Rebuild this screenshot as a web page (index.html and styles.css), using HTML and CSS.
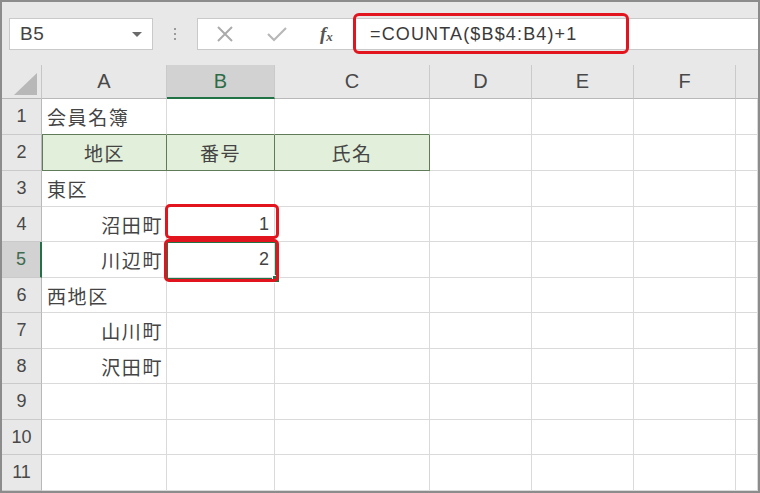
FILE: index.html
```html
<!DOCTYPE html>
<html lang="ja">
<head>
<meta charset="utf-8">
<link rel="stylesheet" href="styles.css">
</head>
<body>
<div class="frame">
  <div class="toolbar">
    <div class="namebox">
      <span class="name">B5</span>
      <span class="caret"></span>
    </div>
    <div class="grip"><span></span><span></span><span></span></div>
    <div class="fbar">
      <div class="fbtns">
        <svg class="ico" width="18" height="16" viewBox="0 0 18 16"><path d="M2 1 L16 15 M16 1 L2 15" stroke="#ababab" stroke-width="2" fill="none"/></svg>
        <svg class="ico" width="22" height="16" viewBox="0 0 22 16"><path d="M2 8 L8 14 L20 2" stroke="#b8b8b8" stroke-width="2.2" fill="none"/></svg>
        <span class="fx">f<sub>x</sub></span>
      </div>
      <div class="formula">=COUNTA($B$4:B4)+1</div>
    </div>
    <div class="redbox formula-mark"></div>
  </div>
  <div class="sheet">
    <div class="corner"><span class="tri"></span></div>
    <div class="ch">A</div><div class="ch sel">B</div><div class="ch">C</div><div class="ch">D</div><div class="ch">E</div><div class="ch">F</div><div class="ch last"></div>

    <div class="rh">1</div><div class="c l hb">会員名簿</div><div class="c hb"></div><div class="c hb"></div><div class="c"></div><div class="c"></div><div class="c"></div><div class="c"></div>
    <div class="rh">2</div><div class="c ctr hd first">地区</div><div class="c ctr hd">番号</div><div class="c ctr hd">氏名</div><div class="c"></div><div class="c"></div><div class="c"></div><div class="c"></div>
    <div class="rh">3</div><div class="c l">東区</div><div class="c"></div><div class="c"></div><div class="c"></div><div class="c"></div><div class="c"></div><div class="c"></div>
    <div class="rh">4</div><div class="c r">沼田町</div><div class="c r num">1</div><div class="c"></div><div class="c"></div><div class="c"></div><div class="c"></div><div class="c"></div>
    <div class="rh sel">5</div><div class="c r">川辺町</div><div class="c r num">2</div><div class="c"></div><div class="c"></div><div class="c"></div><div class="c"></div><div class="c"></div>
    <div class="rh">6</div><div class="c l">西地区</div><div class="c"></div><div class="c"></div><div class="c"></div><div class="c"></div><div class="c"></div><div class="c"></div>
    <div class="rh">7</div><div class="c r">山川町</div><div class="c"></div><div class="c"></div><div class="c"></div><div class="c"></div><div class="c"></div><div class="c"></div>
    <div class="rh">8</div><div class="c r">沢田町</div><div class="c"></div><div class="c"></div><div class="c"></div><div class="c"></div><div class="c"></div><div class="c"></div>
    <div class="rh">9</div><div class="c"></div><div class="c"></div><div class="c"></div><div class="c"></div><div class="c"></div><div class="c"></div><div class="c"></div>
    <div class="rh">10</div><div class="c"></div><div class="c"></div><div class="c"></div><div class="c"></div><div class="c"></div><div class="c"></div><div class="c"></div>
    <div class="rh">11</div><div class="c"></div><div class="c"></div><div class="c"></div><div class="c"></div><div class="c"></div><div class="c"></div><div class="c"></div>

    <div class="selection"><span class="handle"></span></div>
    <div class="redbox mark-b4"></div>
    <div class="redbox mark-b5"></div>
  </div>
</div>
</body>
</html>
```

FILE: styles.css
```css
html, body {
  margin: 0;
  padding: 0;
  background: #ffffff;
}
body {
  font-family: "Liberation Sans", "Noto Sans CJK JP", sans-serif;
  color: #444;
}
.frame {
  width: 760px;
  height: 493px;
  box-sizing: border-box;
  border: 2px solid #8c8c8c;
  background: #e8e8e8;
  overflow: hidden;
}
.toolbar {
  position: relative;
  height: 63px;
  box-sizing: border-box;
  padding-top: 16px;
  display: flex;
  align-items: flex-start;
}
.namebox {
  margin-left: 7px;
  width: 144px;
  height: 32px;
  box-sizing: border-box;
  background: #fff;
  border: 1px solid #c9c9c9;
  display: flex;
  align-items: center;
  justify-content: space-between;
  padding: 0 10px 0 10px;
}
.name {
  font-size: 19px;
  color: #444;
  letter-spacing: 0.5px;
}
.caret {
  width: 0;
  height: 0;
  border-left: 5px solid transparent;
  border-right: 5px solid transparent;
  border-top: 5px solid #6a6a6a;
}
.grip {
  width: 44px;
  height: 32px;
  display: flex;
  flex-direction: column;
  align-items: center;
  justify-content: center;
  gap: 3px;
}
.grip span {
  width: 2px;
  height: 2px;
  background: #9a9a9a;
}
.fbar {
  flex: 1;
  height: 32px;
  box-sizing: border-box;
  background: #fff;
  border: 1px solid #c9c9c9;
  border-right: none;
  display: flex;
  align-items: center;
}
.fbtns {
  width: 155px;
  display: flex;
  align-items: center;
  padding-left: 18px;
  box-sizing: border-box;
}
.fbtns .ico:first-child { margin-right: 32px; }
.fbtns .ico:nth-child(2) { margin-right: 32px; }
.fx {
  font-family: "Liberation Serif", "DejaVu Serif", serif;
  font-style: italic;
  font-weight: bold;
  font-size: 19px;
  color: #555;
}
.fx sub {
  font-size: 13px;
  vertical-align: -1px;
}
.formula {
  padding-left: 17px;
  font-size: 18px;
  color: #3a3a3a;
  letter-spacing: 1.15px;
}
.redbox {
  position: absolute;
  box-sizing: border-box;
  border: 3px solid #e2151e;
  border-radius: 6px;
}
.formula-mark {
  left: 351px;
  top: 11px;
  width: 276px;
  height: 41px;
}
.sheet {
  position: relative;
  display: grid;
  grid-template-columns: 40px 125px 108px 155px 102px 102px 102px 1fr;
  grid-template-rows: 34px 36px 36px 36px 35px 36px 35px 36px 35px 36px 35px 36px;
  background: #fff;
}
.corner {
  position: relative;
  background: #e8e8e8;
  border-right: 1px solid #c6c6c6;
  border-bottom: 1px solid #b8b8b8;
}
.tri {
  position: absolute;
  right: 4px;
  bottom: 3px;
  width: 0;
  height: 0;
  border-left: 23px solid transparent;
  border-bottom: 22px solid #b8b8b8;
}
.ch {
  background: #e8e8e8;
  border-right: 1px solid #cacaca;
  border-bottom: 1px solid #b8b8b8;
  display: flex;
  align-items: center;
  justify-content: center;
  font-size: 20px;
  color: #484848;
}
.ch.sel {
  background: #d2d2d2;
  color: #2e6b47;
  border-bottom: 2px solid #217346;
}
.ch.last { border-right: none; }
.rh {
  background: #e8e8e8;
  border-right: 1px solid #b8b8b8;
  border-bottom: 1px solid #cacaca;
  display: flex;
  align-items: center;
  justify-content: center;
  font-size: 18px;
  color: #484848;
}
.rh.sel {
  background: #d2d2d2;
  color: #3f6a50;
  border-right: 2px solid #217346;
}
.c {
  border-right: 1px solid #dadada;
  border-bottom: 1px solid #dadada;
  display: flex;
  align-items: center;
  font-size: 19px;
  letter-spacing: 1.6px;
  color: #444;
  white-space: nowrap;
}
.c.l { justify-content: flex-start; padding-left: 5px; }
.c.r { justify-content: flex-end; padding-right: 3px; }
.c.num { font-size: 18px; letter-spacing: 0; padding-right: 5px; }
.c.ctr { justify-content: center; }
.c.hb { border-bottom: 1px solid #5f7b58; }
.c.hd {
  background: #e2efda;
  border-right: 1.5px solid #5f7b58;
  border-bottom: 1.5px solid #5f7b58;
}
.c.hd.first { border-left: 1.5px solid #5f7b58; }
.selection {
  position: absolute;
  left: 164px;
  top: 176px;
  width: 111px;
  height: 39px;
  box-sizing: border-box;
  border: 2px solid #217346;
}
.handle {
  position: absolute;
  right: -5px;
  bottom: -5px;
  width: 6px;
  height: 6px;
  background: #217346;
  border: 1px solid #fff;
}
.mark-b4 {
  left: 163px;
  top: 139px;
  width: 114px;
  height: 35px;
  border-radius: 5px;
}
.mark-b5 {
  left: 162px;
  top: 174px;
  width: 115px;
  height: 43px;
  border-radius: 5px;
}
```
